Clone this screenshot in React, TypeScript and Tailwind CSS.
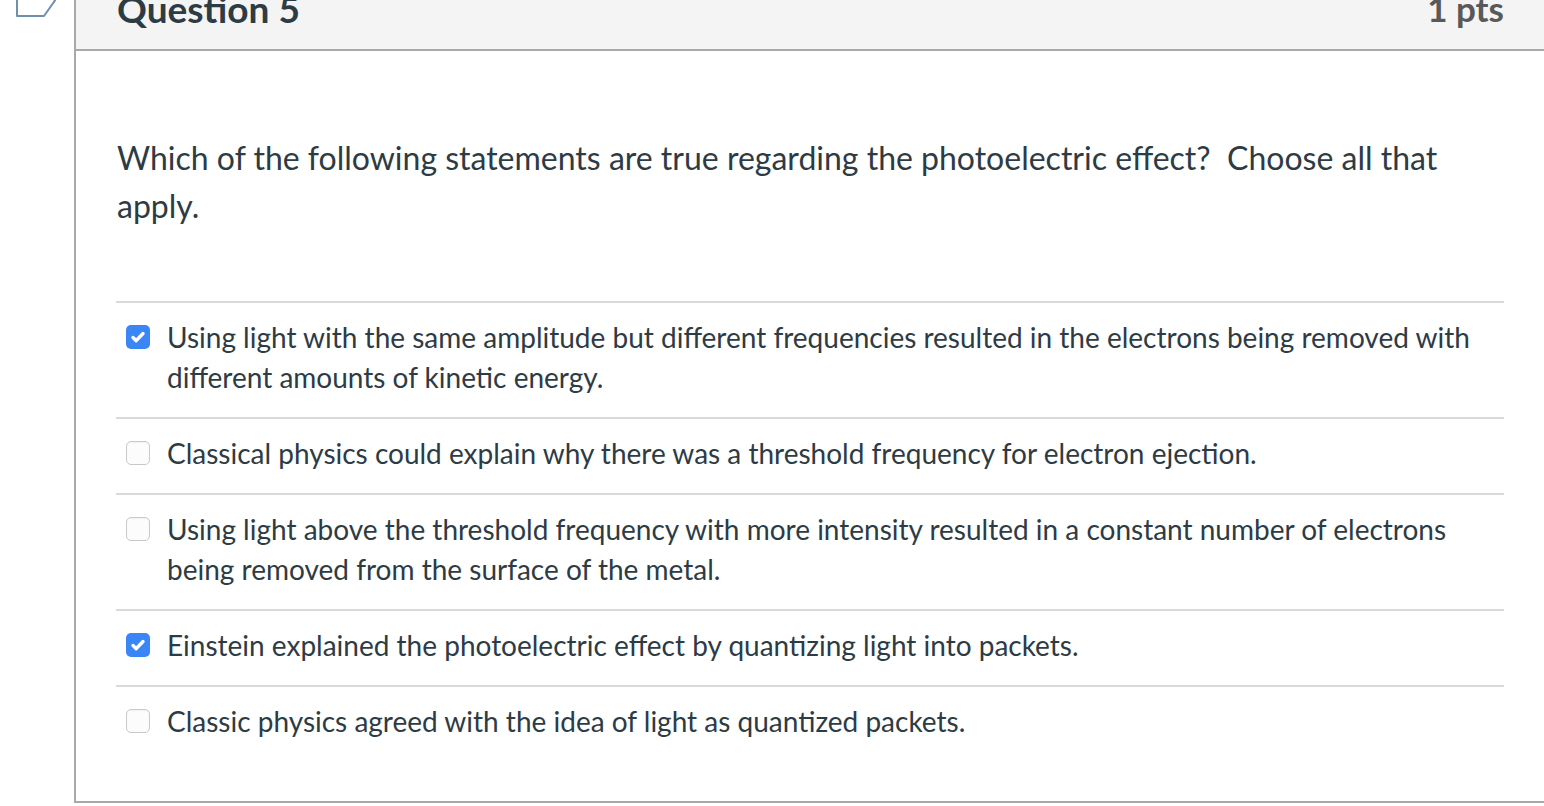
import React from "react";

type Answer = { text: string; checked: boolean };

const ANSWERS: ReadonlyArray<Answer> = [
  {
    text: "Using light with the same amplitude but different frequencies resulted in the electrons being removed with different amounts of kinetic energy.",
    checked: true,
  },
  { text: "Classical physics could explain why there was a threshold frequency for electron ejection.", checked: false },
  {
    text: "Using light above the threshold frequency with more intensity resulted in a constant number of electrons being removed from the surface of the metal.",
    checked: false,
  },
  { text: "Einstein explained the photoelectric effect by quantizing light into packets.", checked: true },
  { text: "Classic physics agreed with the idea of light as quantized packets.", checked: false },
];

const Checkbox = ({ checked }: { checked: boolean }) =>
  checked ? (
    <span className="mt-[8px] flex h-[24px] w-[24px] shrink-0 items-center justify-center rounded-[5px] bg-[#3a86f6]">
      <svg className="h-[16px] w-[16px]" fill="none" stroke="white" strokeWidth={3.4} viewBox="0 0 16 16">
        <path d="M3 8.5l3.2 3.2L13 4.5" strokeLinecap="round" strokeLinejoin="round" />
      </svg>
    </span>
  ) : (
    <span className="mt-[8px] h-[24px] w-[24px] shrink-0 rounded-[5px] border border-[#c9c9c9] bg-[#fcfcfc] shadow-[inset_0_1px_1px_rgba(0,0,0,0.04)]" />
  );

export default function App() {
  return (
    <div className="relative h-[806px] w-[1544px] overflow-hidden bg-white font-['Lato',sans-serif] text-[#2d3b45]">
      {/* flag marker, mostly scrolled out of view */}
      <svg className="absolute left-[15px] top-[-17px] h-[35px] w-[42px]" fill="none" viewBox="0 0 42 35">
        <path d="M2 2h27l11 15.5L29 33H2z" stroke="#6f8fae" strokeLinejoin="round" strokeWidth={2} />
      </svg>

      <div className="ml-[74px] -mt-[33px] border-b-2 border-l-2 border-[#a9a9a9]">
        <div className="flex h-[84px] items-center justify-between border-b-2 border-[#a9a9a9] bg-[#f4f4f4] pl-[41px] pr-[40px]">
          <h2 className="text-[37px] font-bold leading-none">Question 5</h2>
          <span className="text-[35px] font-bold leading-none text-[#595959]">1 pts</span>
        </div>

        <div className="px-[40px] pt-[83px] pb-[40px]">
          <p className="pl-px text-[32px] leading-[48px]">
            Which of the following statements are true regarding the photoelectric effect?&nbsp; Choose all that apply.
          </p>

          <div className="mt-[71px] border-t-2 border-[#dadada]">
            {ANSWERS.map((a, i) => (
              <div
                key={i}
                className={`flex items-start gap-[17px] pb-[20px] pl-[10px] pt-[14px] ${
                  i < ANSWERS.length - 1 ? "border-b-2 border-[#dadada]" : ""
                }`}>
                <Checkbox checked={a.checked} />
                <span className="text-[28px] leading-[40px]">{a.text}</span>
              </div>
            ))}
          </div>
        </div>
      </div>
    </div>
  );
}
